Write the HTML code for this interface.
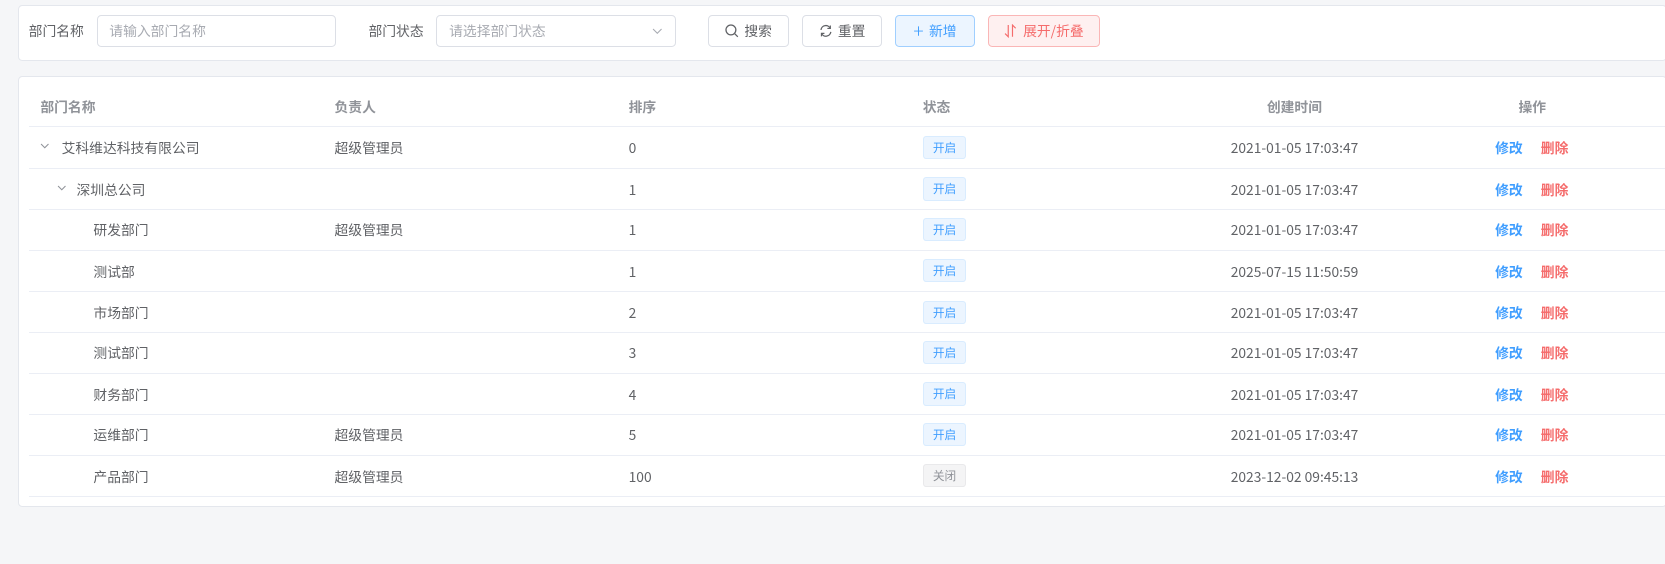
<!DOCTYPE html>
<html><head><meta charset="utf-8"><style>
html,body{margin:0;padding:0;}
body{width:1665px;height:564px;overflow:hidden;background:#f5f6f8;font-family:"Noto Sans CJK SC","Liberation Sans",sans-serif;}
#w{zoom:1.0619;width:1568px;height:531px;position:relative;}
.card{position:absolute;left:17px;right:-2px;background:#fff;border:1px solid #e4e7ed;border-radius:4px;}
.abs{position:absolute;}
.lbl{font-size:13px;color:#606266;top:14px;line-height:30px;}
.inp{top:14px;height:28px;border:1px solid #dcdfe6;border-radius:4px;font-size:13px;color:#a8abb2;line-height:28px;padding-left:11px;box-sizing:content-box;}
.btn{top:14px;border:1px solid #dcdfe6;border-radius:4px;font-size:13px;color:#606266;line-height:28px;text-align:center;box-sizing:border-box;height:30px;white-space:nowrap;}
.row{position:absolute;left:9px;right:0;height:38px;font-size:13px;color:#606266;}
.row::after{content:'';position:absolute;left:18px;right:0;bottom:-1px;border-bottom:1px solid #ebeef5;}
.row span{position:absolute;top:0;line-height:38px;white-space:nowrap;}
.hd span{color:#909399;font-weight:bold;line-height:37px;}
.tag{position:absolute;left:860px;top:8px;width:41px;height:22px;box-sizing:border-box;border:1px solid #d9ecff;background:#ecf5ff;color:#409eff;font-size:11px;text-align:center;line-height:20px;border-radius:3px;}
.tag.off{background:#f4f4f5;border-color:#e9e9eb;color:#909399;}
.e{color:#409eff;left:1399px;font-weight:bold;}
.d{color:#f56c6c;left:1442px;font-weight:bold;}
.t{left:1150px;width:120px;text-align:center;}
.arr{position:absolute;top:15px;}
</style></head><body><div id="w">
<div class="card" style="top:5px;height:51px;"></div>
<div class="abs lbl" style="left:27px">部门名称</div>
<div class="abs inp" style="left:91px;width:213px">请输入部门名称</div>
<div class="abs lbl" style="left:347px">部门状态</div>
<div class="abs inp" style="left:411px;width:213px">请选择部门状态<svg style="position:absolute;right:12px;top:11px" width="10" height="6" viewBox="0 0 10 6"><path d="M1 1 L5 5 L9 1" fill="none" stroke="#a8abb2" stroke-width="1"/></svg></div>
<div class="abs btn" style="left:667px;width:76px"><svg width="13" height="13" viewBox="0 0 14 14" style="vertical-align:-2px;margin-right:5px"><circle cx="6" cy="6" r="5" fill="none" stroke="#606266" stroke-width="1.3"/><path d="M10 10 L13 13" stroke="#606266" stroke-width="1.3"/></svg>搜索</div>
<div class="abs btn" style="left:755px;width:76px"><svg width="13" height="13" viewBox="0 0 14 14" style="vertical-align:-2px;margin-right:5px"><path d="M2 6 A5 5 0 0 1 11.5 4.5 M12 8 A5 5 0 0 1 2.5 9.5" fill="none" stroke="#606266" stroke-width="1.3"/><path d="M11.5 1.5 V4.5 H8.5 M2.5 12.5 V9.5 H5.5" fill="none" stroke="#606266" stroke-width="1.2"/></svg>重置</div>
<div class="abs btn" style="left:843px;width:75px;background:#ecf5ff;border-color:#a0cfff;color:#409eff"><span style="font-size:18px;vertical-align:-2px;margin-right:5px;font-weight:300">+</span>新增</div>
<div class="abs btn" style="left:930px;width:106px;background:#fef0f0;border-color:#fab6b6;color:#f56c6c"><svg width="12" height="13" viewBox="0 0 12 13" style="vertical-align:-2px;margin-right:6px"><path d="M4 1 V12 L1 9 M8 12 V1 L11 4" fill="none" stroke="#f56c6c" stroke-width="1.1"/></svg>展开/折叠</div>

<div class="card" style="top:72px;height:404px;"></div>
<div class="row hd" style="top:82px;height:37px"><span style="left:29px">部门名称</span><span style="left:306px">负责人</span><span style="left:583px">排序</span><span style="left:860px">状态</span><span class="t">创建时间</span><span style="left:1421px">操作</span></div>

<div class="row" style="top:120px"><svg class="arr" style="left:29px" width="9" height="6" viewBox="0 0 9 6"><path d="M1 1 L4.5 4.5 L8 1" fill="none" stroke="#909399"/></svg><span style="left:49px">艾科维达科技有限公司</span><span style="left:306px">超级管理员</span><span style="left:583px">0</span><div class="tag">开启</div><span class="t">2021-01-05 17:03:47</span><span class="e">修改</span><span class="d">删除</span></div>
<div class="row" style="top:159px"><svg class="arr" style="left:45px" width="9" height="6" viewBox="0 0 9 6"><path d="M1 1 L4.5 4.5 L8 1" fill="none" stroke="#909399"/></svg><span style="left:63px">深圳总公司</span><span style="left:583px">1</span><div class="tag">开启</div><span class="t">2021-01-05 17:03:47</span><span class="e">修改</span><span class="d">删除</span></div>
<div class="row" style="top:197px"><span style="left:79px">研发部门</span><span style="left:306px">超级管理员</span><span style="left:583px">1</span><div class="tag">开启</div><span class="t">2021-01-05 17:03:47</span><span class="e">修改</span><span class="d">删除</span></div>
<div class="row" style="top:236px"><span style="left:79px">测试部</span><span style="left:583px">1</span><div class="tag">开启</div><span class="t">2025-07-15 11:50:59</span><span class="e">修改</span><span class="d">删除</span></div>
<div class="row" style="top:275px"><span style="left:79px">市场部门</span><span style="left:583px">2</span><div class="tag">开启</div><span class="t">2021-01-05 17:03:47</span><span class="e">修改</span><span class="d">删除</span></div>
<div class="row" style="top:313px"><span style="left:79px">测试部门</span><span style="left:583px">3</span><div class="tag">开启</div><span class="t">2021-01-05 17:03:47</span><span class="e">修改</span><span class="d">删除</span></div>
<div class="row" style="top:352px"><span style="left:79px">财务部门</span><span style="left:583px">4</span><div class="tag">开启</div><span class="t">2021-01-05 17:03:47</span><span class="e">修改</span><span class="d">删除</span></div>
<div class="row" style="top:390px"><span style="left:79px">运维部门</span><span style="left:306px">超级管理员</span><span style="left:583px">5</span><div class="tag">开启</div><span class="t">2021-01-05 17:03:47</span><span class="e">修改</span><span class="d">删除</span></div>
<div class="row" style="top:429px"><span style="left:79px">产品部门</span><span style="left:306px">超级管理员</span><span style="left:583px">100</span><div class="tag off">关闭</div><span class="t">2023-12-02 09:45:13</span><span class="e">修改</span><span class="d">删除</span></div>
</div></body></html>
